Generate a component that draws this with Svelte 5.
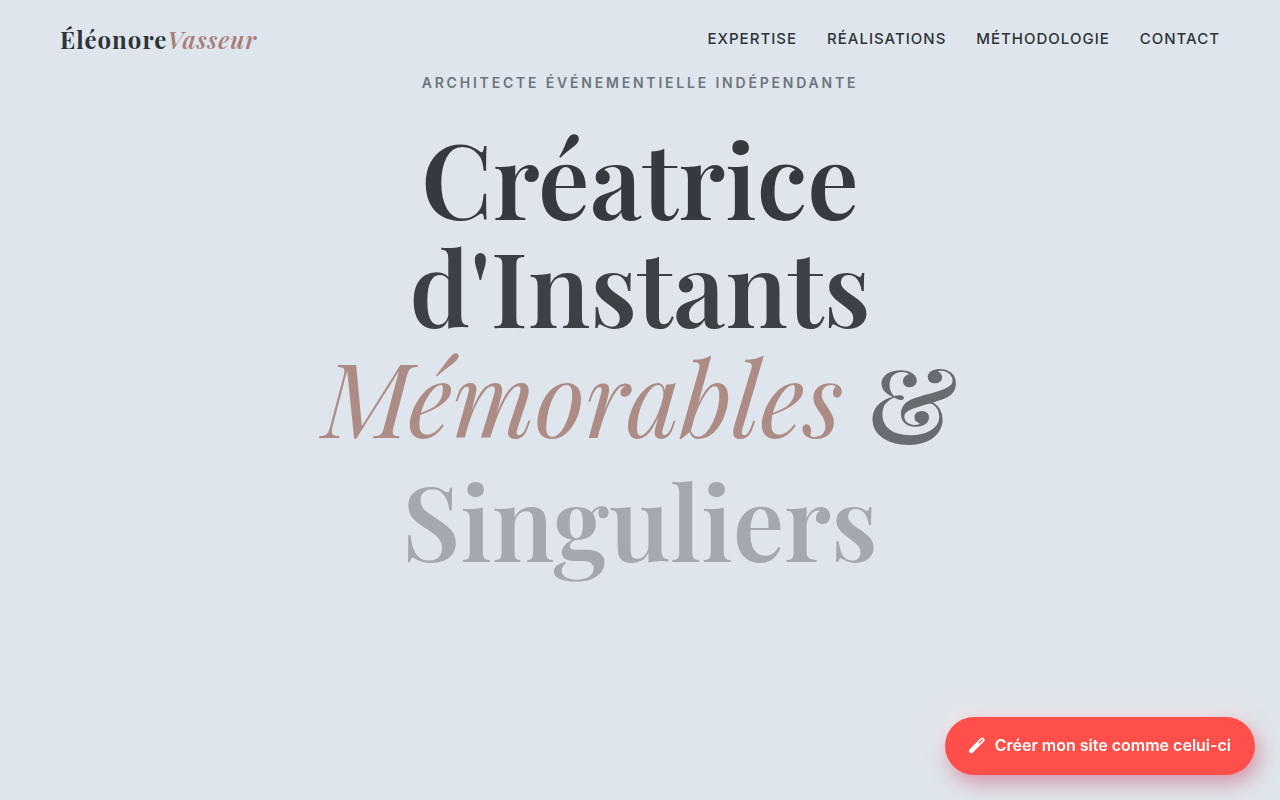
<script>
  const links = [
    { label: 'Expertise', href: '#expertise' },
    { label: 'Réalisations', href: '#realisations' },
    { label: 'Méthodologie', href: '#methodologie' },
    { label: 'Contact', href: '#contact' }
  ];
</script>

<div class="page">
  <header>
    <a class="logo" href="#top">Éléonore<em>Vasseur</em></a>
    <nav aria-label="Navigation principale">
      {#each links as link}
        <a href={link.href}>{link.label}</a>
      {/each}
    </nav>
  </header>

  <main id="top">
    <p class="role">Architecte événementielle indépendante</p>
    <h1>
      <span class="line first">Créatrice</span>
      <span class="line second">d'Instants</span>
      <span class="line third"><em>Mémorables</em> <span class="amp">&amp;</span></span>
      <span class="line last">Singuliers</span>
    </h1>
  </main>

  <a class="cta" href="#creer">
    <svg viewBox="0 0 18 18" width="18" height="18" aria-hidden="true">
      <path d="M3.3 14.9 14.2 3.9" stroke="#fff" stroke-width="4.6" stroke-linecap="round" />
      <path d="M11.3 6.8 14.2 3.9" stroke="#ff4f4b" stroke-width="1.3" stroke-linecap="round" />
    </svg>
    <span>Créer mon site comme celui-ci</span>
  </a>
</div>

<style>
  :global(body) {
    margin: 0;
    background: #dfe5ec;
  }

  .page {
    min-height: 100vh;
    box-sizing: border-box;
    color: #2d3436;
    font-family: Inter, "Liberation Sans", sans-serif;
  }

  header {
    display: flex;
    align-items: center;
    justify-content: space-between;
    padding: 24px 60px 20px;
  }

  a {
    color: inherit;
    text-decoration: none;
  }

  .logo {
    font: 700 24px/30px "Playfair Display", "Liberation Serif", serif;
    letter-spacing: 1px;
  }

  .logo em {
    color: #a67f78;
    font-weight: 600;
  }

  nav {
    display: flex;
    gap: 30px;
    font-size: 15px;
    font-weight: 500;
    line-height: 30px;
    letter-spacing: 1px;
    text-transform: uppercase;
  }

  main {
    text-align: center;
  }

  .role {
    margin: 0 0 32px;
    color: #6c757d;
    font-size: 14px;
    font-weight: 600;
    line-height: 18px;
    letter-spacing: 0.2em;
    text-transform: uppercase;
  }

  h1 {
    margin: 0;
    font: 600 8vw/108px "Playfair Display", "Liberation Serif", serif;
  }

  .line {
    display: block;
  }

  .first {
    color: #343a3e;
  }

  .second {
    color: #3b4145;
  }

  .third {
    padding-top: 2px;
  }

  .third em {
    color: #ae8c86;
    font-weight: 400;
  }

  .amp {
    display: inline-block;
    padding-top: 6px;
    color: #676c71;
    vertical-align: top;
  }

  .last {
    margin-top: 10px;
    color: #a4a9af;
  }

  .cta {
    position: fixed;
    right: 25px;
    bottom: 25px;
    display: flex;
    align-items: center;
    gap: 9px;
    padding: 16px 24px 18px 23px;
    border-radius: 29px;
    background: #ff4f4b;
    box-shadow: 4px 8px 20px rgba(200, 80, 110, 0.55), -4px -6px 20px rgba(245, 236, 236, 0.8);
    color: #fff;
    font-size: 16px;
    font-weight: 600;
    line-height: 24px;
  }

  svg {
    fill: none;
  }
</style>
